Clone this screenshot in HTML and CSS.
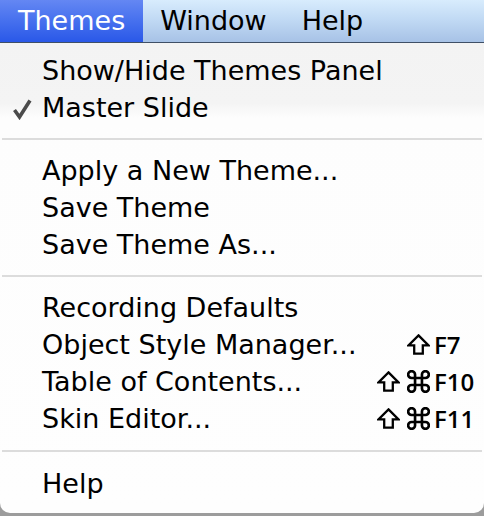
FILE: index.html
```html
<!DOCTYPE html>
<html>
<head>
<meta charset="utf-8">
<link rel="stylesheet" href="styles.css">
</head>
<body>
<div class="screen">
  <div class="menubar">
    <div class="mb-item active">Themes</div>
    <div class="mb-item">Window</div>
    <div class="mb-item">Help</div>
  </div>
  <div class="menu">
    <div class="row"><span class="check"></span><span class="label">Show/Hide Themes Panel</span></div>
    <div class="row"><span class="check"><svg class="tick" viewBox="0 0 20 22"><path d="M2.5 12 L7.5 19 L18 2.5"/></svg></span><span class="label">Master Slide</span></div>
    <div class="sep"></div>
    <div class="row"><span class="check"></span><span class="label">Apply a New Theme...</span></div>
    <div class="row"><span class="check"></span><span class="label">Save Theme</span></div>
    <div class="row"><span class="check"></span><span class="label">Save Theme As...</span></div>
    <div class="sep"></div>
    <div class="row"><span class="check"></span><span class="label">Recording Defaults</span></div>
    <div class="row"><span class="check"></span><span class="label">Object Style Manager...</span>
      <span class="mods"><svg class="shift" viewBox="0 0 24 22"><path d="M12 1.5 L22.5 12 H16.5 V20.5 H7.5 V12 H1.5 Z"/></svg></span><span class="key">F7</span></div>
    <div class="row"><span class="check"></span><span class="label">Table of Contents...</span>
      <span class="mods"><svg class="shift" viewBox="0 0 24 22"><path d="M12 1.5 L22.5 12 H16.5 V20.5 H7.5 V12 H1.5 Z"/></svg><svg class="cmd" viewBox="2 2 20 20"><path d="M15 6v12a3 3 0 1 0 3-3H6a3 3 0 1 0 3 3V6a3 3 0 1 0-3 3h12a3 3 0 1 0-3-3"/></svg></span><span class="key">F10</span></div>
    <div class="row"><span class="check"></span><span class="label">Skin Editor...</span>
      <span class="mods"><svg class="shift" viewBox="0 0 24 22"><path d="M12 1.5 L22.5 12 H16.5 V20.5 H7.5 V12 H1.5 Z"/></svg><svg class="cmd" viewBox="2 2 20 20"><path d="M15 6v12a3 3 0 1 0 3-3H6a3 3 0 1 0 3 3V6a3 3 0 1 0-3 3h12a3 3 0 1 0-3-3"/></svg></span><span class="key">F11</span></div>
    <div class="sep sep-last"></div>
    <div class="row"><span class="check"></span><span class="label">Help</span></div>
  </div>
</div>
</body>
</html>
```

FILE: styles.css
```css
html, body {
  margin: 0;
  padding: 0;
}
body {
  width: 484px;
  height: 516px;
  overflow: hidden;
  background: #9c9c9c;
  font-family: "DejaVu Sans", "Noto Sans", sans-serif;
}
.screen {
  width: 484px;
}
.menubar {
  display: flex;
  height: 42px;
  border-bottom: 1px solid #3f4f66;
  background: linear-gradient(to bottom, #d8ecfd 0%, #bfd8f3 50%, #a7c2e6 100%);
}
.mb-item {
  font-size: 27px;
  line-height: 42px;
  color: #000;
  padding: 0 18px 0 17px;
}
.mb-item.active {
  color: #fff;
  padding: 0 18px 0 18px;
  background: linear-gradient(to bottom, #6487f3 0%, #4670ee 50%, #2a58e8 100%);
}
.menu {
  background: linear-gradient(to bottom, #f3f3f3 0px, #f4f4f4 60px, #fdfdfd 75px, #fefefe 100%);
  border-radius: 0 0 10px 10px;
  padding: 9px 0 11px 0;
}
.row {
  display: flex;
  align-items: center;
  height: 37px;
  font-size: 27px;
  color: #000;
}
.check {
  width: 42px;
  height: 37px;
  display: flex;
  align-items: center;
  padding-left: 12px;
  box-sizing: border-box;
}
.tick {
  width: 20px;
  height: 22px;
  fill: none;
  stroke: #4b4b4b;
  stroke-width: 3.6;
  stroke-linejoin: miter;
  stroke-linecap: butt;
  margin-top: 2px;
}
.label {
  flex: 1;
}
.mods {
  display: flex;
  align-items: center;
  justify-content: flex-end;
  gap: 7px;
}
.mods svg {
  fill: none;
  stroke: #000;
  stroke-linejoin: miter;
}
.shift {
  width: 23px;
  height: 21px;
  stroke-width: 2.4;
}
.cmd {
  width: 23px;
  height: 23px;
  stroke-width: 2.3;
}
.key {
  width: 44px;
  margin-right: 10px;
  padding-left: 4px;
  font-family: "Open Sans", "DejaVu Sans", sans-serif;
  font-weight: 600;
  font-size: 24px;
  box-sizing: border-box;
}
.sep {
  height: 2px;
  margin: 12px 2px;
  background: #dcdcdc;
}
.sep-last {
  margin: 13px 2px 13px;
}
```
